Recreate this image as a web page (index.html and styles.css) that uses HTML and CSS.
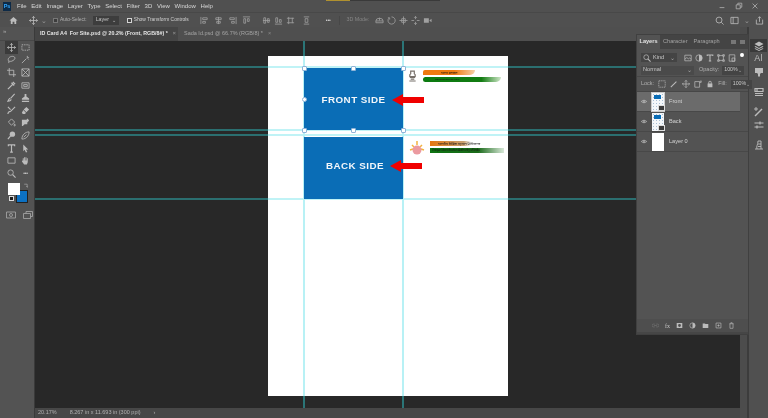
FILE: index.html
```html
<!DOCTYPE html>
<html lang="en">
<head>
<meta charset="utf-8">
<title>Photoshop</title>
<link rel="stylesheet" href="styles.css">
</head>
<body>
<div class="app">
  <header class="menubar">
    <div class="ps-logo">Ps</div>
    <nav class="menu"><span>File</span><span>Edit</span><span>Image</span><span>Layer</span><span>Type</span><span>Select</span><span>Filter</span><span>3D</span><span>View</span><span>Window</span><span>Help</span></nav>
    <div class="progress"><i></i></div>
    <div class="winctl">
      <svg class="ic" viewBox="0 0 10 10"><path d="M2 7h6" /></svg>
      <svg class="ic" viewBox="0 0 10 10"><path d="M1.500 3.500h5v5h-5zM3.500 3.500v-2h5v5h-2"/></svg>
      <svg class="ic" viewBox="0 0 10 10"><path d="M2 2l6 6M8 2l-6 6"/></svg>
    </div>
  </header>

  <div class="options">
    <svg class="ic home" viewBox="0 0 10 10"><path class="f" d="M5 1l4.500 4H8v4H6V6.500H4V9H2V5H.5z"/></svg>
    <svg class="ic move" viewBox="0 0 10 10"><path d="M5 .5v9M.5 5h9M3.500 2L5 .5 6.500 2M3.500 8L5 9.500 6.500 8M2 3.500L.5 5 2 6.500M8 3.500L9.500 5 8 6.500"/></svg>
    <span class="chev">⌄</span>
    <span class="check dim"></span><span class="opt-label dim-text">Auto-Select:</span>
    <span class="select">Layer<b>⌄</b></span>
    <span class="check on"></span><span class="opt-label">Show Transform Controls</span>
    <div class="align">
      <svg class="ic wide" viewBox="0 0 10 10"><path d="M1 1v8M3 2h5v2H3zM3 6h3v2H3z"/></svg>
      <svg class="ic wide" viewBox="0 0 10 10"><path d="M5 1v8M2 2h6v2H2zM3 6h4v2H3z"/></svg>
      <svg class="ic wide" viewBox="0 0 10 10"><path d="M9 1v8M2 2h5v2H2zM4 6h3v2H4z"/></svg>
      <svg class="ic wide" viewBox="0 0 10 10"><path d="M1 1h8M2 3h2v5H2zM6 3h2v3H6z"/></svg>
      <svg class="ic gap-l" viewBox="0 0 10 10"><path d="M1 5h8M2 2h2v6H2zM6 3h2v4H6z"/></svg>
      <svg class="ic" viewBox="0 0 10 10"><path d="M1 9h8M2 2h2v5H2zM6 4h2v3H6z"/></svg>
      <svg class="ic" viewBox="0 0 10 10"><path d="M1 2.500h8M1 7.500h8M3 1v8M7 2v6"/></svg>
      <svg class="ic gap-s" viewBox="0 0 10 10"><path d="M2 1h6M2 9h6M3.500 3h3v4h-3z"/></svg>
      <span class="dots gap-d">•••</span>
      <span class="sep"></span>
      <span class="mode">3D Mode:</span>
      <svg class="ic" viewBox="0 0 10 10"><path d="M1 5.500a4 3 0 0 1 8 0M1 5.500h8v2H1zM5 2v3"/></svg>
      <svg class="ic" viewBox="0 0 10 10"><path d="M5 1a4 4 0 1 1-3 1.500M1 2h2v2"/></svg>
      <svg class="ic" viewBox="0 0 10 10"><path d="M5 .5v9M.5 5h9M3 3h4v4H3z"/></svg>
      <svg class="ic" viewBox="0 0 10 10"><path d="M5 .5v3M5 6.500v3M.5 5h3M6.500 5h3M3.500 2L5 .5 6.500 2M3.500 8L5 9.500 6.500 8"/></svg>
      <svg class="ic" viewBox="0 0 10 10"><path class="f" d="M1 2.500h5.500v5H1zM7 5l2.500-2v4z"/></svg>
    </div>
    <div class="opt-right">
      <svg class="ic" viewBox="0 0 10 10"><circle cx="4.500" cy="4.500" r="3.300"/><path d="M7 7l2.500 2.500"/></svg>
      <svg class="ic" viewBox="0 0 10 10"><path d="M1 1.500h8v7H1zM3.500 1.500v7"/></svg>
      <span class="chev small">⌄</span>
      <svg class="ic" viewBox="0 0 10 10"><path d="M1.500 4v5h7V4M5 6.500V.8M3.300 2.500L5 .8l1.700 1.700"/></svg>
    </div>
  </div>

  <div class="main">
    <aside class="toolbar">
      <div class="grip">»</div>
      <div class="tools">
        <span class="tool active"><svg class="ic" viewBox="0 0 10 10"><path d="M5 .5v9M.5 5h9M3.500 2L5 .5 6.500 2M3.500 8L5 9.500 6.500 8M2 3.500L.5 5 2 6.500M8 3.500L9.500 5 8 6.500"/></svg></span>
        <span class="tool"><svg class="ic" viewBox="0 0 10 10"><path stroke-dasharray="1.500 1" d="M1 2h8v6H1z"/></svg></span>
        <span class="tool"><svg class="ic" viewBox="0 0 10 10"><path d="M2 7C0 4 3 1.500 6 1.500S10 4 7 6 3 6.500 2 7v2"/></svg></span>
        <span class="tool"><svg class="ic" viewBox="0 0 10 10"><path d="M1 9l5-5M7 1v2M9 3H7M8.500 5L7.500 4"/></svg></span>
        <span class="tool"><svg class="ic" viewBox="0 0 10 10"><path d="M2.500 0v7.500H10M0 2.500h7.500V10"/></svg></span>
        <span class="tool"><svg class="ic" viewBox="0 0 10 10"><path d="M1 1h8v8H1zM1 1l8 8M9 1L1 9"/></svg></span>
        <span class="tool"><svg class="ic" viewBox="0 0 10 10"><path d="M1 9l5-5M5 2l3 3M6.500 1L9 3.500" stroke-width="1.400"/></svg></span>
        <span class="tool"><svg class="ic" viewBox="0 0 10 10"><path d="M1 2h8v6H1zM3 4h4v2H3z"/></svg></span>
        <span class="tool"><svg class="ic" viewBox="0 0 10 10"><path d="M8.500 1L4 6M3.500 6C2 6 2 8 1 9c2 0 3.500-.5 3.500-2" stroke-width="1.200"/></svg></span>
        <span class="tool"><svg class="ic" viewBox="0 0 10 10"><path class="f" d="M4 1h2v3l3 2v1.500H1V6l3-2zM1 8.500h8V10H1z"/></svg></span>
        <span class="tool"><svg class="ic" viewBox="0 0 10 10"><path d="M9 1L4 6M1 9c0-2 1-3 3-3M1 1l3 3" stroke-width="1.200"/></svg></span>
        <span class="tool"><svg class="ic" viewBox="0 0 10 10"><path class="f" d="M6 1l3 3-3 3-3-3zM2.500 4.500l3 3-1 1.500H2L1 7.500z"/></svg></span>
        <span class="tool"><svg class="ic" viewBox="0 0 10 10"><path d="M1.500 4.500L5 1l3.500 3.500L5 8zM8.500 6.500c1 1.500.5 2.500 0 2.500s-1-1-0-2.500z"/></svg></span>
        <span class="tool"><svg class="ic" viewBox="0 0 10 10"><path class="f" d="M1 2h5l1.500-1.500L9 3 7 5v2H4L2 9H1z"/></svg></span>
        <span class="tool"><svg class="ic" viewBox="0 0 10 10"><circle cx="6" cy="3.500" r="3" class="f"/><path d="M4 5.500L1 9" stroke-width="1.400"/></svg></span>
        <span class="tool"><svg class="ic" viewBox="0 0 10 10"><path d="M9 1C5 1 1 4 1 9c5 0 8-4 8-8zM3 7l3-3"/></svg></span>
        <span class="tool"><svg class="ic" viewBox="0 0 10 10"><path d="M1.500 2.500V1h7v1.500M5 1v8M3.500 9h3" stroke-width="1.300"/></svg></span>
        <span class="tool"><svg class="ic" viewBox="0 0 10 10"><path class="f" d="M2.500.5l5.500 5.500H5.500L7 9 5.500 9.500 4 6.500 2.500 8z"/></svg></span>
        <span class="tool"><svg class="ic" viewBox="0 0 10 10"><path d="M1 2h8v6H1z"/></svg></span>
        <span class="tool"><svg class="ic" viewBox="0 0 10 10"><path class="f" d="M2 5V2.500h1V5h.5V1.500h1V5H5V1.500h1V5h.5V2.500h1V7L6.500 9.500H3.500L1 6l.5-1z"/></svg></span>
        <span class="tool"><svg class="ic" viewBox="0 0 10 10"><circle cx="4" cy="4" r="3"/><path d="M6.300 6.300L9.500 9.500" stroke-width="1.300"/></svg></span>
        <span class="tool dots-tool">•••</span>
      </div>
      <div class="swatches">
        <span class="bg-swatch"></span><span class="fg-swatch"></span>
        <svg class="ic swap" viewBox="0 0 10 10"><path d="M2 2h5v5M5.500 5.500L7 7l1.500-1.500"/></svg>
        <span class="mini"><i></i></span>
      </div>
      <div class="tool-bottom">
        <svg class="ic" viewBox="0 0 10 10"><path d="M.5 2h9v6h-9z"/><circle cx="5" cy="5" r="1.500"/></svg>
        <svg class="ic" viewBox="0 0 10 10"><path d="M.5 3.500h7v5h-7zM3 3.500V1.500h6.500v5H7.500"/></svg>
      </div>
    </aside>

    <section class="workspace">
      <div class="tabs">
        <div class="tab active">ID Card A4&nbsp; For Site.psd @ 20.2% (Front, RGB/8#) *<em>×</em></div>
        <div class="tab">Sada Id.psd @ 66.7% (RGB/8) *<em>×</em></div>
      </div>
      <div class="canvas">
        <i class="g-h g1"></i><i class="g-h g2"></i><i class="g-h g3"></i><i class="g-h g4"></i>
        <i class="g-v v1"></i><i class="g-v v2"></i>
        <div class="page">
          <i class="p-h p1"></i><i class="p-h p2"></i><i class="p-h p3"></i><i class="p-h p4"></i>
          <i class="p-v q1"></i><i class="p-v q2"></i>
          <div class="card front">FRONT SIDE</div>
          <div class="card back">BACK SIDE</div>
          <svg class="arrow a-front" viewBox="0 0 32 12"><path d="M0 6L11 0v3h21v6H11v3z"/></svg>
          <svg class="arrow a-back" viewBox="0 0 32 12"><path d="M0 6L11 0v3h21v6H11v3z"/></svg>
          <svg class="emblem" viewBox="0 0 10 14"><path d="M3 1h4v3l1 1v2H2V5l1-1zM2 8h6M3 10h4M1.500 12h7" fill="none" stroke="#77706a" stroke-width="1.300"/></svg>
          <div class="brush b1"><span>भारत सरकार</span></div>
          <div class="brush b2"><span>Government of India</span></div>
          <svg class="sun" viewBox="0 0 16 14"><path d="M1 9l3-1M3 4l2 2M8 0v4M13 4l-2 2M15 9l-3-1" stroke="#f3b33f" stroke-width="1.500"/><circle cx="8" cy="9" r="4.500" fill="#eb9aa0"/></svg>
          <div class="brush b3"><span>भारतीय विशिष्ट पहचान प्राधिकरण</span></div>
          <div class="brush b4"><span>Unique Identification Authority of India</span></div>
          <i class="h h1"></i><i class="h h2"></i><i class="h h3"></i><i class="h h4"></i><i class="h h5"></i><i class="h h6"></i><i class="h h7"></i>
        </div>
      </div>
      <footer class="status"><span class="zoom">20.17%</span><span class="docsize">8.267 in x 11.693 in (300 ppi)</span><span class="st-chev">›</span></footer>
    </section>

    <aside class="dock">
      <div class="strip"></div>
      <div class="dock-icons">
        <span class="dk active"><svg class="ic" viewBox="0 0 10 10"><path class="f" d="M5 .5L9.500 3 5 5.500.5 3zM1.500 5L5 7l3.500-2 1 .7L5 8 .5 5.700zM1.500 7.200L5 9l3.500-1.800 1 .6L5 10 .5 7.800z"/></svg></span>
        <span class="dk t">Aǀ</span>
        <span class="dk"><svg class="ic" viewBox="0 0 10 10"><path class="f" d="M1 1h8v5H7l-1 1v2.500H4V7L3 6H1z"/></svg></span>
        <span class="dk line"><svg class="ic" viewBox="0 0 10 10"><path d="M1 1.500h8v3H1zM1 6.500h8M1 8.500h8M3 1.500v3" stroke-width="1.200"/></svg></span>
        <span class="dk line"><svg class="ic" viewBox="0 0 10 10"><path d="M1 9l7-7" stroke-width="1.500"/><path d="M1 1h2v2H1z"/></svg></span>
        <span class="dk"><svg class="ic" viewBox="0 0 10 10"><path d="M.5 3h9M.5 7h9M6 1.500v3M3 5.500v3" stroke-width="1.200"/></svg></span>
        <span class="dk line"><svg class="ic" viewBox="0 0 10 10"><path d="M3 9c-1-3 1-4 1-8h3v8M1 9h8M4 4h3M4 6.500h3"/></svg></span>
      </div>
    </aside>

    <div class="panel">
      <div class="panel-tabs">
        <span class="ptab active">Layers</span><span class="ptab">Character</span><span class="ptab">Paragraph</span>
        <span class="ptab-menu"><i></i><i></i></span>
      </div>
      <div class="row filter">
        <span class="field kind"><svg class="ic tiny" viewBox="0 0 10 10"><circle cx="4" cy="4" r="3"/><path d="M6 6l3.500 3.500" stroke-width="1.300"/></svg>Kind<b>⌄</b></span>
        <svg class="ic" viewBox="0 0 10 10"><path d="M1 1.500h8v7H1zM1 6.500l2.500-2 2 1.500 1.500-1 2 1.500"/></svg>
        <svg class="ic" viewBox="0 0 10 10"><circle cx="5" cy="5" r="4"/><path class="f" d="M5 1a4 4 0 0 1 0 8z"/></svg>
        <svg class="ic" viewBox="0 0 10 10"><path d="M1.500 2.500V1.300h7v1.200M5 1.300v7.500M3.500 8.800h3" stroke-width="1.300"/></svg>
        <svg class="ic" viewBox="0 0 10 10"><path d="M2 2h6v6H2zM.8 .8h2v2h-2zM7.200 .8h2v2h-2zM.8 7.200h2v2h-2zM7.200 7.200h2v2h-2z"/></svg>
        <svg class="ic" viewBox="0 0 10 10"><path d="M1.500 1h7v8h-7zM5 5h3.500v4H5z"/></svg>
        <span class="dot"></span>
      </div>
      <div class="row blend">
        <span class="field normal">Normal<b>⌄</b></span>
        <span class="lbl">Opacity:</span><span class="field pct">100%<b>⌄</b></span>
      </div>
      <div class="row locks">
        <span class="lbl">Lock:</span>
        <svg class="ic" viewBox="0 0 10 10"><path stroke-dasharray="1.500 .8" d="M1 1h8v8H1z"/></svg>
        <svg class="ic" viewBox="0 0 10 10"><path d="M1 9l7-7" stroke-width="1.300"/></svg>
        <svg class="ic" viewBox="0 0 10 10"><path d="M5 .5v9M.5 5h9M3.500 2L5 .5 6.500 2M3.500 8L5 9.500 6.500 8M2 3.500L.5 5 2 6.500M8 3.500L9.500 5 8 6.500"/></svg>
        <svg class="ic" viewBox="0 0 10 10"><path d="M1 2h6v7H1zM7 2l2-1v2H7"/></svg>
        <svg class="ic" viewBox="0 0 10 10"><path class="f" d="M2 4.500h6V9H2zM3 4.500V3a2 2 0 0 1 4 0v1.500H6V3a1 1 0 0 0-2 0v1.500z"/></svg>
        <span class="lbl fill">Fill:</span><span class="field pct">100%<b>⌄</b></span>
      </div>
      <ul class="layers">
        <li class="layer selected">
          <svg class="eye" viewBox="0 0 10 6"><path d="M.5 3C3 .2 7 .2 9.500 3 7 5.800 3 5.800.5 3z"/><circle cx="5" cy="3" r="1.300"/></svg>
          <span class="thumb linked"><i class="tb"></i><i class="sm"></i></span><span class="lname">Front</span>
        </li>
        <li class="layer">
          <svg class="eye" viewBox="0 0 10 6"><path d="M.5 3C3 .2 7 .2 9.500 3 7 5.800 3 5.800.5 3z"/><circle cx="5" cy="3" r="1.300"/></svg>
          <span class="thumb"><i class="tb"></i><i class="sm"></i></span><span class="lname">Back</span>
        </li>
        <li class="layer">
          <svg class="eye" viewBox="0 0 10 6"><path d="M.5 3C3 .2 7 .2 9.500 3 7 5.800 3 5.800.5 3z"/><circle cx="5" cy="3" r="1.300"/></svg>
          <span class="thumb plain"></span><span class="lname">Layer 0</span>
        </li>
      </ul>
      <div class="panel-foot">
        <svg class="ic faint" viewBox="0 0 10 10"><path d="M4 3H2a2 2 0 0 0 0 4h2M6 3h2a2 2 0 0 1 0 4H6M3 5h4"/></svg>
        <span class="fx">fx</span>
        <svg class="ic" viewBox="0 0 10 10"><path class="f" fill-rule="evenodd" d="M1 1.500h8v7H1zM5 3a2 2 0 1 0 0 4 2 2 0 0 0 0-4z"/></svg>
        <svg class="ic" viewBox="0 0 10 10"><circle cx="5" cy="5" r="3.800"/><path class="f" d="M5 1.200a3.800 3.800 0 0 1 0 7.600z"/></svg>
        <svg class="ic" viewBox="0 0 10 10"><path class="f" d="M1 2h3l1 1h4v5.500H1z"/></svg>
        <svg class="ic" viewBox="0 0 10 10"><path d="M1.500 1.500h7v7h-7zM5 3.300v3.400M3.300 5h3.400"/></svg>
        <svg class="ic" viewBox="0 0 10 10"><path d="M2 2.500h6M4 2.500V1h2v1.500M2.800 2.500V9h4.400V2.500"/></svg>
      </div>
    </div>
  </div>
</div>
</body>
</html>
```

FILE: styles.css
```css
* { box-sizing: border-box; }
html, body { margin: 0; padding: 0; background: #535353; }
ul { list-style: none; margin: 0; padding: 0; }
i, em { font-style: normal; }

.app {
  width: 768px; height: 418px; overflow: hidden;
  display: flex; flex-direction: column;
  background: #535353; color: #c8c8c8;
  font: 6px/1 "Liberation Sans", "Noto Sans", sans-serif;
  filter: blur(.7px);
}
.ic { width: 9px; height: 9px; flex: none; fill: none; stroke: #bcbcbc; stroke-width: .9; }
.ic .f, .ic.f { fill: #bcbcbc; stroke: none; }
.chev { font-size: 7px; color: #9a9a9a; }

.menubar { height: 12px; flex: none; display: flex; align-items: center; position: relative; padding-left: 3px; background: #505050; }
.ps-logo { width: 8px; height: 9px; background: #0d2a47; color: #31a8ff; font: bold 5.500px/9px "Liberation Sans", sans-serif; text-align: center; }
.menu { display: flex; margin-left: 6px; gap: 4.700px; }
.menu span { color: #d8d8d8; }
.progress { position: absolute; left: 326px; top: 0; width: 114px; height: 1px; background: #3a3a3a; }
.progress i { display: block; width: 24px; height: 1px; background: #b0912f; }
.winctl { margin-left: auto; display: flex; gap: 7px; padding-right: 9px; width: 50px; justify-content: space-between; }
.winctl .ic { width: 8px; height: 8px; }

.options { height: 15px; flex: none; display: flex; align-items: center; background: #505050; border-top: 1px solid #484848; padding-left: 9px; }
.home.ic { margin-right: 11px; }
.options .move { margin-right: 3px; }
.check { width: 5px; height: 5px; margin-left: 6px; border: 1px solid #777; background: #3c3c3c; flex: none; }
.check.on { margin-left: 8px; background: #444; border-color: #d4d4d4; }
.opt-label { margin-left: 2px; font-size: 4.900px; color: #d0d0d0; white-space: nowrap; }
.dim-text { color: #b0b0b0; }
.select { width: 26px; height: 9px; margin-left: 6px; background: #3d3d3d; color: #c4c4c4; display: flex; align-items: center; justify-content: space-between; padding: 0 3px; font-size: 5.300px; }
.select b { font-weight: 400; line-height: 4px; }
.align { display: flex; align-items: center; gap: 3px; margin-left: 11px; }
.align .ic { stroke: #a0a0a0; }
.align .ic .f { fill: #a0a0a0; }
.align .wide { margin-right: 2px; }
.gap-l { margin-left: 6px; }
.gap-s { margin-left: 4px; }
.gap-d { margin-left: 12px; }
.dots { font-size: 5px; letter-spacing: -.2px; color: #d0d0d0; }
.sep { width: 1px; height: 9px; background: #474747; margin: 0 3px 0 6px; }
.mode { color: #868686; margin-right: 3px; font-size: 5.300px; white-space: nowrap; }
.opt-right { margin-left: auto; padding-right: 4px; display: flex; align-items: center; gap: 6px; }
.opt-right .small { margin: 0 -1px; }

.main { flex: 1; min-height: 0; display: flex; position: relative; }

.toolbar { width: 35px; flex: none; background: #535353; border-right: 1px solid #3a3a3a; position: relative; }
.grip { height: 14px; font-size: 6px; line-height: 8px; color: #aaa; padding-left: 3px; border-bottom: 1px solid #474747; }
.tools { display: grid; grid-template-columns: 13px 13px; grid-auto-rows: 12.600px; gap: 0 1px; padding: 0 0 0 5px; }
.tool { display: flex; align-items: center; justify-content: center; }
.tool.active { background: #3b3b3b; }
.dots-tool { font-size: 5px; color: #ccc; letter-spacing: -.3px; }
.swatches { position: relative; height: 21px; margin-top: 3px; }
.bg-swatch { position: absolute; left: 16px; top: 7px; width: 12px; height: 13px; background: #0c71c3; border: 1px solid #222; }
.fg-swatch { position: absolute; left: 8px; top: 0; width: 12px; height: 12px; background: #fff; }
.swap { position: absolute; left: 23px; top: 0; width: 6px; height: 6px; }
.mini { position: absolute; left: 9px; top: 13px; width: 5px; height: 5px; background: #1e1e1e; border: 1px solid #ddd; }
.tool-bottom { display: flex; gap: 7px; padding-left: 6px; margin-top: 6px; }
.tool-bottom .ic { width: 10px; height: 10px; stroke: #a0a0a0; }

.workspace { flex: 1; min-width: 0; display: flex; flex-direction: column; }
.tabs { height: 14px; flex: none; display: flex; background: #4f4f4f; }
.tab { display: flex; align-items: center; padding: 0 5px; color: #a4a4a4; font-size: 5.500px; white-space: nowrap; }
.tab em { margin-left: 5px; color: #8a8a8a; }
.tab.active { width: 143px; flex: none; background: #454545; color: #e4e4e4; font-weight: 700; font-size: 5.300px; }
.tab + .tab { padding-left: 6px; }

.canvas { flex: 1; position: relative; background: #282828; overflow: hidden; }
.g-h { position: absolute; left: 0; right: 0; height: 2px; background: #2b6f70; }
.g-v { position: absolute; top: 0; bottom: 0; width: 2px; background: #2b7577; }
.g1 { top: 25px; } .g2 { top: 88px; } .g3 { top: 93px; } .g4 { top: 157px; }
.v1 { left: 268px; } .v2 { left: 367px; }

.page { position: absolute; left: 233px; top: 15px; width: 240px; height: 340px; background: #fff; overflow: hidden; }
.p-h { position: absolute; left: 0; right: 0; height: 2px; background: #c0f3f6; }
.p-v { position: absolute; top: 0; bottom: 0; width: 2px; background: #b8f1f5; }
.p1 { top: 10px; } .p2 { top: 73px; } .p3 { top: 78px; } .p4 { top: 142px; }
.q1 { left: 35px; } .q2 { left: 134px; }
.card { position: absolute; left: 36px; width: 99px; height: 62px; background: #0a6db6; color: #f2f6fa; display: flex; align-items: center; justify-content: center; font: bold 9.800px/1 "Liberation Sans", sans-serif; letter-spacing: .45px; }
.front { top: 12px; padding-top: 1px; }
.back { top: 81px; padding: 0 0 4px 3px; }
.arrow { position: absolute; width: 32px; height: 12px; fill: #f00000; z-index: 3; }
.a-front { left: 124px; top: 38px; }
.a-back { left: 122px; top: 104px; }
.emblem { position: absolute; left: 140px; top: 12px; width: 9px; height: 17px; }
.sun { position: absolute; left: 141px; top: 85px; width: 16px; height: 14px; }
.brush { position: absolute; height: 5px; display: flex; align-items: center; }
.brush span { font: 3.500px/1 "Noto Sans", "DejaVu Sans", sans-serif; color: #111; white-space: nowrap; }
.b1 { left: 155px; top: 14px; width: 52px; background: linear-gradient(90deg, #ee7a10, #ee7a10 60%, #f6d0a8); border-radius: 3px 0 8px 0; padding-left: 18px; }
.b2 { left: 155px; top: 21px; width: 78px; background: linear-gradient(90deg, #0b7a10, #127c12 75%, #cfe6c8); border-radius: 3px 0 6px 3px; padding-left: 12px; }
.b2 span { font-size: 2.500px; }
.b3 { left: 162px; top: 85px; width: 68px; background: linear-gradient(90deg, #e5760f, #c9a070 50%, #fff 60%); padding-left: 8px; }
.b4 { left: 162px; top: 92px; width: 74px; background: linear-gradient(90deg, #0d7412, #1a6a1a 65%, #d8e8d8); padding-left: 2px; }
.b4 span { font-size: 2.600px; }
.h { position: absolute; width: 5px; height: 5px; margin: -2px 0 0 -2px; background: #fff; border: 1px solid #8fb4d8; border-radius: 1px; z-index: 4; }
.h1 { left: 36px; top: 12px; } .h2 { left: 85px; top: 12px; } .h3 { left: 135px; top: 12px; }
.h4 { left: 36px; top: 43px; border-radius: 50%; }
.h5 { left: 36px; top: 74px; } .h6 { left: 85px; top: 74px; } .h7 { left: 135px; top: 74px; }

.status { height: 10px; flex: none; display: flex; align-items: center; background: #474747; color: #b0b0b0; font-size: 5.500px; padding-left: 3px; }
.docsize { margin-left: 13px; }
.st-chev { margin-left: 13px; }

.dock { width: 28px; flex: none; display: flex; background: #4e4e4e; }
.strip { width: 9px; flex: none; background: #4c4c4c; border-right: 2px solid #3c3c3c; }
.dock-icons { flex: 1; display: flex; flex-direction: column; align-items: center; padding-top: 12px; background: #505050; }
.dk { width: 17px; height: 13px; display: flex; align-items: center; justify-content: center; font-size: 9px; color: #bcbcbc; }
.dk.active { background: #3a3a3a; }
.dk.line { margin-top: 7px; }
.dk .ic { width: 10px; height: 10px; }

.panel { position: absolute; left: 636px; top: 7px; width: 113px; height: 301px; background: #535353; border: 1px solid #404040; display: flex; flex-direction: column; }
.panel-tabs { height: 14px; flex: none; display: flex; background: #444; align-items: stretch; }
.ptab { padding: 0 3px; display: flex; align-items: center; color: #a4a4a4; font-size: 5.600px; }
.ptab.active { width: 23px; background: #535353; color: #e4e4e4; font-weight: 700; justify-content: center; padding: 0; }
.ptab-menu { margin-left: auto; display: flex; gap: 4px; align-items: center; padding-right: 3px; }
.ptab-menu i { width: 5px; height: 4px; background: #777; }
.row { display: flex; align-items: center; flex: none; padding: 0 4px; }
.field { height: 9px; background: #444; display: flex; align-items: center; color: #c8c8c8; font-size: 5.600px; padding: 0 2px; }
.field b { margin-left: auto; font-weight: 400; line-height: 4px; color: #aaa; }
.tiny { width: 7px; height: 7px; margin-right: 2px; }
.filter { height: 17px; gap: 3px; }
.kind { width: 40px; margin-right: 4px; }
.filter .ic { width: 8px; height: 8px; }
.dot { width: 4px; height: 4px; background: #fff; border-radius: 50%; margin: -6px 0 0 1px; }
.blend { height: 11px; gap: 3px; border-bottom: 1px solid #474747; padding-bottom: 2px; }
.normal { width: 59px; margin-right: 2px; background: #4a4a4a; }
.lbl { color: #b0b0b0; font-size: 5.500px; }
.pct { width: 24px; margin-left: auto; font-size: 5.300px; }
.locks { height: 15px; gap: 4px; border-bottom: 1px solid #474747; }
.locks .ic { width: 8px; height: 8px; }
.fill { margin-left: auto; }
.locks .pct { margin-left: 0; }
.layers { height: 61px; flex: none; }
.layer { height: 20px; display: flex; align-items: center; border-bottom: 1px solid #484848; padding-left: 4px; }
.layer.selected { background: #6b6b6b; margin-right: 8px; }
.eye { width: 6px; height: 5px; fill: none; stroke: #d6d6d6; stroke-width: .9; margin-right: 5px; flex: none; }
.thumb { width: 12px; height: 18px; background: #f4f7fa radial-gradient(circle, #a9bfd4 .6px, transparent .8px) 0 0 / 3px 3px; position: relative; flex: none; }
.thumb.linked { outline: 1px solid #ccc; }
.tb { position: absolute; left: 2px; top: 2px; width: 7px; height: 4px; background: #0a6db6; }
.sm { position: absolute; right: -1px; bottom: 0; width: 7px; height: 6px; background: #3b3b3b; border: 1px solid #ddd; }
.thumb.plain { background: #fff; }
.lname { margin-left: 5px; color: #d4d4d4; font-size: 5.600px; }
.panel-foot { margin-top: auto; height: 15px; flex: none; display: flex; align-items: center; justify-content: flex-end; gap: 6px; padding-right: 13px; background: #4e4e4e; border-bottom: 2px solid #464646; }
.panel-foot .ic { width: 7px; height: 7px; }
.faint { opacity: .35; }
.fx { color: #c4c4c4; font-size: 6px; font-family: "Liberation Serif", serif; }
```
